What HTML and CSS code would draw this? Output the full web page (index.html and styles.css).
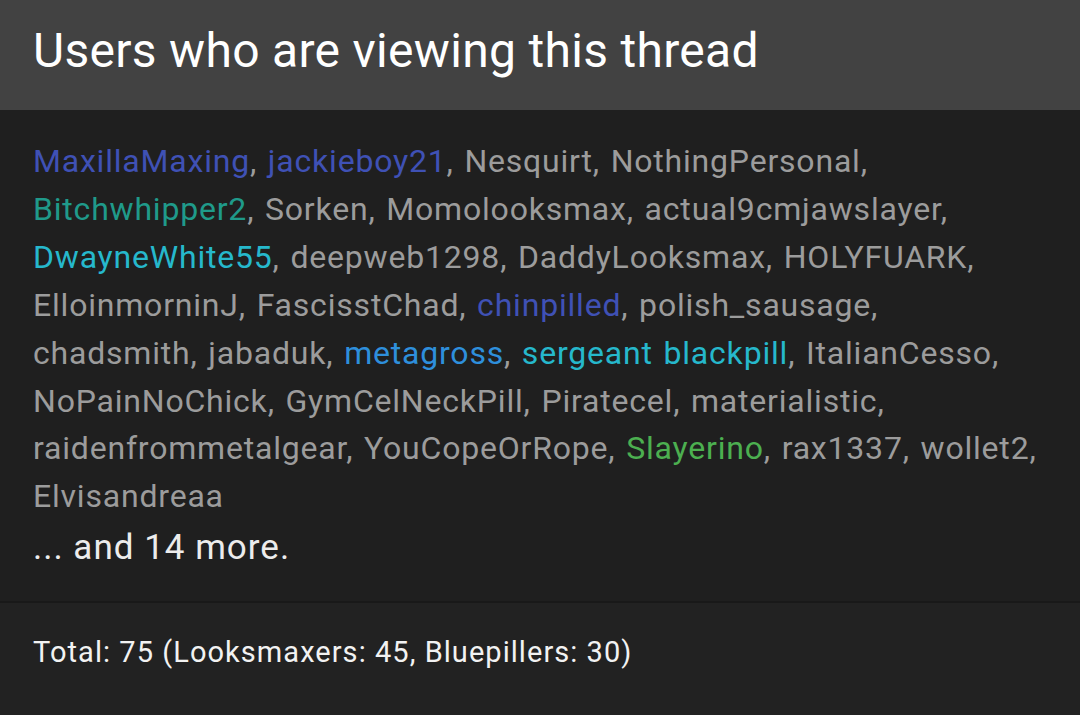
FILE: index.html
```html
<!DOCTYPE html>
<html lang="en">
<head>
<meta charset="utf-8">
<title>Users who are viewing this thread</title>
<link rel="stylesheet" href="styles.css">
</head>
<body>
<section class="block">
  <h3 class="block-header">Users who are viewing this thread</h3>
  <div class="block-body">
    <ul class="user-list">
      <li><a class="user u-indigo">MaxillaMaxing</a>, </li><li><a class="user u-indigo">jackieboy21</a>, </li><li><a class="user">Nesquirt</a>, </li><li><a class="user">NothingPersonal</a>, </li><li><a class="user u-teal">Bitchwhipper2</a>, </li><li><a class="user">Sorken</a>, </li><li><a class="user">Momolooksmax</a>, </li><li><a class="user">actual9cmjawslayer</a>, </li><li><a class="user u-cyan">DwayneWhite55</a>, </li><li><a class="user">deepweb1298</a>, </li><li><a class="user">DaddyLooksmax</a>, </li><li><a class="user">HOLYFUARK</a>, </li><li><a class="user">ElloinmorninJ</a>, </li><li><a class="user">FascisstChad</a>, </li><li><a class="user u-indigo">chinpilled</a>, </li><li><a class="user">polish_sausage</a>, </li><li><a class="user">chadsmith</a>, </li><li><a class="user">jabaduk</a>, </li><li><a class="user u-blue">metagross</a>, </li><li><a class="user u-cyan">sergeant blackpill</a>, </li><li><a class="user">ItalianCesso</a>, </li><li><a class="user">NoPainNoChick</a>, </li><li><a class="user">GymCelNeckPill</a>, </li><li><a class="user">Piratecel</a>, </li><li><a class="user">materialistic</a>, </li><li><a class="user">raidenfrommetalgear</a>, </li><li><a class="user">YouCopeOrRope</a>, </li><li><a class="user u-green">Slayerino</a>, </li><li><a class="user">rax1337</a>, </li><li><a class="user">wollet2</a>, </li><li><a class="user">Elvisandreaa</a></li>
    </ul>
    <p class="more">... and 14 more.</p>
  </div>
  <div class="block-footer">
    <span class="total">Total: 75 (Looksmaxers: 45, Bluepillers: 30)</span>
  </div>
</section>
</body>
</html>
```

FILE: styles.css
```css
html, body {
  margin: 0;
  padding: 0;
  background: #1f1f1f;
}

body {
  width: 1080px;
  height: 715px;
  overflow: hidden;
  font-family: Roboto, "Noto Sans", sans-serif;
}

.block {
  display: flex;
  flex-direction: column;
  height: 715px;
}

.block-header {
  margin: 0;
  height: 110px;
  box-sizing: border-box;
  padding: 23px 33px 0;
  background: #424242;
  color: #ffffff;
  font-size: 48px;
  font-weight: 400;
  line-height: 56px;
  letter-spacing: 0.3px;
}

.block-body {
  height: 491px;
  box-sizing: border-box;
  padding: 28px 30px 0 33px;
}

.user-list {
  list-style: none;
  margin: 0;
  padding: 0;
  font-size: 32px;
  line-height: 47.9px;
  letter-spacing: 0.8px;
  word-spacing: 2px;
  color: #9c9c9c;
}

.user-list li {
  display: inline;
}

.user {
  color: #9c9c9c;
}

.u-indigo { color: #3f51b5; }
.u-teal { color: #1f9a8a; }
.u-cyan { color: #26b8cc; }
.u-blue { color: #2e8fdc; }
.u-green { color: #4caf50; }

.more {
  margin: 0;
  color: #ececec;
  font-size: 35px;
  line-height: 54px;
  letter-spacing: 1px;
}

.block-footer {
  flex: 1;
  display: flex;
  align-items: center;
  padding: 0 33px 14px;
  background: #222222;
  border-top: 2px solid #191919;
}

.total {
  color: #f2f2f2;
  font-size: 29px;
  letter-spacing: 1.05px;
}
```
